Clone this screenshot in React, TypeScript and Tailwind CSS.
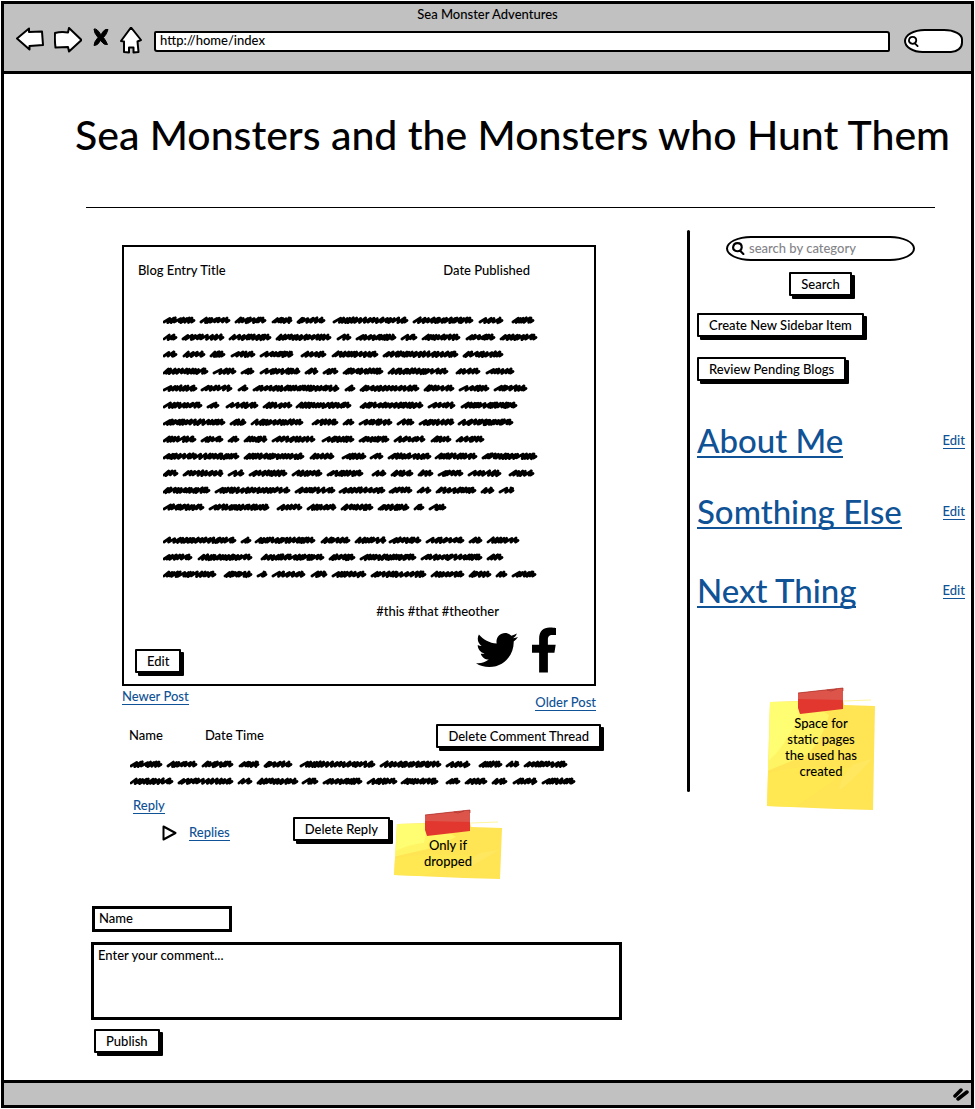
import type { ReactNode } from "react";
import { FaFacebookF, FaTwitter } from "react-icons/fa";

type Line = number[];

const postLines: Line[] = [
  [0, 32, 37, 67, 72, 103, 109, 129, 134, 162, 170, 245, 250, 310, 316, 340, 349, 371],
  [0, 14, 19, 61, 66, 108, 113, 168, 174, 188, 193, 233, 238, 254, 259, 297, 303, 332, 337, 374],
  [0, 14, 20, 42, 47, 62, 68, 92, 97, 130, 138, 163, 169, 215, 220, 295, 300, 340],
  [0, 45, 50, 73, 78, 91, 97, 137, 142, 155, 160, 175, 180, 220, 225, 285, 293, 317, 323, 351],
  [0, 34, 38, 69, 75, 85, 90, 176, 182, 192, 197, 256, 261, 291, 296, 326, 331, 364],
  [0, 39, 44, 56, 63, 95, 100, 129, 133, 188, 197, 260, 265, 292, 298, 354],
  [0, 62, 67, 83, 88, 140, 149, 175, 180, 191, 196, 229, 234, 251, 256, 291, 295, 350],
  [0, 33, 38, 60, 65, 76, 81, 104, 109, 152, 159, 191, 196, 226, 231, 262, 268, 288, 293, 321],
  [0, 76, 81, 141, 147, 171, 179, 203, 207, 220, 225, 268, 272, 314, 319, 374],
  [0, 15, 20, 60, 65, 81, 86, 124, 129, 159, 164, 200, 209, 223, 228, 250, 255, 270, 275, 300, 305, 338, 346, 371],
  [0, 47, 52, 127, 132, 172, 176, 222, 226, 249, 254, 268, 273, 313, 318, 331, 336, 351],
  [0, 41, 46, 106, 114, 139, 144, 173, 178, 210, 215, 246, 251, 261, 266, 283],
  [],
  [0, 73, 78, 88, 92, 152, 158, 187, 192, 223, 226, 258, 263, 301, 306, 319, 324, 356],
  [0, 29, 35, 89, 98, 161, 166, 192, 197, 253, 258, 319, 324, 340],
  [0, 53, 61, 89, 94, 104, 109, 142, 148, 164, 169, 203, 208, 263, 268, 301, 306, 328, 333, 344, 349, 373],
];

const commentLines: Line[] = [
  [0, 32, 37, 67, 72, 103, 109, 129, 134, 162, 170, 245, 250, 311, 316, 340, 349, 372, 376, 389, 394, 437],
  [0, 43, 48, 103, 108, 122, 127, 168, 172, 188, 193, 232, 237, 267, 271, 308, 316, 330, 335, 357, 362, 377, 383, 407, 412, 445],
];

function wordPath(start: number, end: number, y: number, seed: number) {
  let s = seed;
  const next = () => {
    s = (s * 1103515245 + 12345) % 2147483648;
    return s / 2147483648;
  };
  let x = start + 1;
  let d = `M${x} ${y + 2}`;
  while (x < end - 8) {
    const rise = 4 + next() * 3;
    const top = y - 1.4 - next() * 0.8;
    const back = 0.8 + next() * 2.2;
    const low = y + 1.8 + next() * 0.9;
    d += `L${(x + rise).toFixed(1)} ${top.toFixed(1)}L${(x + rise - back).toFixed(1)} ${low.toFixed(1)}`;
    x += rise - back;
  }
  return `${d}L${end - 3} ${y - 2}L${end - 3.5} ${y + 2}L${end - 1} ${y + 0.5}`;
}

function Scribble({ lines, width, label }: { lines: Line[]; width: number; label: string }) {
  const height = lines.length * 17;
  let d = "";
  lines.forEach((line, row) => {
    const y = row * 17 + 8 - (row > 12 ? 1 : 0);
    for (let i = 0; i < line.length; i += 2) {
      d += wordPath(line[i], line[i + 1], y, row * 97 + i * 31 + 7);
    }
  });
  return (
    <svg role="img" aria-label={label} width={width} height={height} viewBox={`0 0 ${width} ${height}`} className="block max-w-full">
      <path d={d} fill="none" stroke="#000" strokeWidth="2.8" strokeLinecap="round" strokeLinejoin="round" />
    </svg>
  );
}

function SketchButton({ children }: { children: ReactNode }) {
  return (
    <button type="button" className="h-6 whitespace-nowrap rounded-[1px] border-2 border-black bg-white px-2.5 leading-5 shadow-[3px_3px_0_#000]">
      {children}
    </button>
  );
}

function SketchLink({ children }: { children: ReactNode }) {
  return (
    <a href="#" className="inline-block whitespace-nowrap border-b border-[#0f5295] leading-[15px] text-[#0f5295]">
      {children}
    </a>
  );
}

function StickyNote({ height, children }: { height: number; children: ReactNode }) {
  const b = height;
  return (
    <div className="relative w-[108px] px-2 pt-7 pb-5 text-center leading-4">
      <svg aria-hidden="true" className="absolute inset-0" width="108" height={height} viewBox={`0 0 108 ${height}`}>
        <path d={`M3 15L76 13L77 18L108 19L106 ${b}L70 ${b - 1}L0 ${b - 4}Z`} fill="#ffe454" />
        <path d={`M3 15L40 14L62 28Q54 ${b * 0.45} 40 ${b * 0.55}L1 ${b * 0.68}Z`} fill="#fff968" opacity=".75" />
        <path d={`M3 15L34 15L30 34Q16 ${b * 0.5} 2 ${b * 0.6}Z`} fill="#ffff76" opacity=".8" />
        <path d={`M1 ${b * 0.7}Q34 ${b * 0.62} 84 ${b * 0.66}Q60 ${b * 0.8} 28 ${b - 3}L0 ${b - 4}Z`} fill="#ffe850" opacity=".8" />
        <path d={`M86 ${b * 0.63}L106 ${b * 0.58}L84 ${b * 0.76}Q76 ${b * 0.82} 72 ${b * 0.84}Q74 ${b * 0.72} 86 ${b * 0.63}Z`} fill="#fff07c" opacity=".3" />
        <path d="M77 14L104 13" stroke="#fff6a0" />
        <path d="M31 6L76 1V22L33 27L31 21Z" fill="#e2372f" />
        <path d="M31 6L76 1V13L31 12Z" fill="#dd544a" />
        <path d="M60 3L64 4L70 2M31 6L76 1V4" stroke="#a9332c" strokeWidth=".7" fill="none" />
      </svg>
      <p className="relative">{children}</p>
    </div>
  );
}

function NavIcon({ label, width, d, solid }: { label: string; width: number; d: string; solid?: boolean }) {
  return (
    <button type="button" aria-label={label} className="shrink-0">
      <svg width={width} height="28" viewBox={`0 0 ${width} 28`} className="block">
        <path d={d} fill={solid ? "#000" : "#fff"} stroke="#000" strokeWidth={solid ? 1 : 2} strokeLinejoin="round" />
      </svg>
    </button>
  );
}

function Magnifier({ size }: { size: number }) {
  return (
    <svg aria-hidden="true" width={size} height={size} viewBox="0 0 12 12" className="shrink-0">
      <path d="M5 1Q9 1 9 5Q8.500 8.500 5 8.500Q1 8 1 5Q1.500 1 5 1ZM7.500 8L10.500 11" fill="none" stroke="#000" strokeWidth="2" strokeLinecap="round" />
    </svg>
  );
}

const sidebarItems = [
  { title: "About Me", gap: "mt-[42px]" },
  { title: "Somthing Else", gap: "mt-[35px]" },
  { title: "Next Thing", gap: "mt-[43px]" },
];

export default function App() {
  return (
    <div className="flex min-h-screen flex-col bg-white p-px font-['Lato',sans-serif] text-[13px] font-medium text-black">
      <div className="flex flex-1 flex-col border-[3px] border-black">
        <header className="border-b-[3px] border-black bg-[#c1c1c1] pb-[13px]">
          <div className="text-center leading-5">Sea Monster Adventures</div>
          <nav className="flex h-[34px] items-center gap-2.5 pr-2 pl-3">
            <NavIcon label="Back" width={28} d="M1 11.500L13 1.500V5L26 4.500L27 18L13.500 19V22.500Z" />
            <NavIcon label="Forward" width={28} d="M1 6Q7 4.500 14 5.500L15 1L27.500 13L15 24.500L14 20L1.500 20.500Q.5 13 1 6Z" />
            <NavIcon
              label="Stop"
              width={18}
              solid
              d="M2 2Q5 1 9 8Q12 1.500 16 2.500Q15 7 11.500 10.500Q14 14 15.500 17.500Q12 18.500 8.500 13.500Q5.500 19 2 18.500Q2 15 6 10.500Q2 6 2 2Z"
            />
            <NavIcon label="Home" width={22} d="M11 0.500L21 13L17.500 14.500L18.500 25L13.500 25.500V20.500H9V25.500L4 25V14.500L1 14Z" />
            <input
              aria-label="Address"
              defaultValue="http://home/index"
              className="ml-0.5 h-[21px] min-w-0 flex-1 rounded-[2px_3px_2px_3px] border-2 border-black bg-white px-1 pb-0.5 outline-none"
            />
            <label className="ml-1 flex h-6 w-[59px] shrink-0 items-center rounded-[24px_22px_14px_22px/14px_12px_12px_14px] border-2 border-black bg-white pl-0.5">
              <Magnifier size={11} />
              <input aria-label="Quick search" className="w-full min-w-0 bg-transparent outline-none" />
            </label>
          </nav>
        </header>

        <main className="flex-1">
          <h1 className="pt-[37px] pl-[50px] text-center text-[41px] leading-[48px]">Sea Monsters and the Monsters who Hunt Them</h1>
          <hr className="mt-12 mr-9 ml-[82px] border-t border-black" />

          <div className="flex pt-[22px]">
            <div className="min-w-0 flex-1">
              <article className="mt-[15px] mr-[91px] ml-[118px] border-2 border-black pt-[13px]">
                <div className="flex justify-between pr-16 pl-3.5 leading-5">
                  <h2>Blog Entry Title</h2>
                  <span>Date Published</span>
                </div>
                <div className="mt-8 ml-[39px]">
                  <Scribble lines={postLines} width={376} label="Blog entry text" />
                </div>
                <p className="mt-[17px] pr-[95px] text-right leading-5">#this #that #theother</p>
                <div className="flex items-end justify-between pt-1.5 pr-9 pb-[11px] pl-[11px]">
                  <SketchButton>Edit</SketchButton>
                  <div className="flex items-center gap-3">
                    <a href="#" aria-label="Twitter">
                      <FaTwitter size={42} />
                    </a>
                    <a href="#" aria-label="Facebook">
                      <FaFacebookF size={46} className="w-7" />
                    </a>
                  </div>
                </div>
              </article>

              <div className="mt-[3px] mr-[91px] ml-[118px] flex items-start justify-between">
                <SketchLink>Newer Post</SketchLink>
                <div className="pt-1">
                  <SketchLink>Older Post</SketchLink>
                </div>
              </div>

              <section>
                <div className="mt-[11px] mr-[86px] ml-[125px] flex items-center justify-between">
                  <div className="flex gap-[42px]">
                    <span>Name</span>
                    <span>Date Time</span>
                  </div>
                  <SketchButton>Delete Comment Thread</SketchButton>
                </div>
                <div className="mt-2 ml-[126px]">
                  <Scribble lines={commentLines} width={447} label="Comment text" />
                </div>
                <div className="mt-1.5 ml-[129px]">
                  <SketchLink>Reply</SketchLink>
                </div>
                <div className="mt-0.5 mr-[185px] ml-[158px] flex items-start">
                  <div className="flex flex-1 items-center gap-3 pt-2">
                    <svg aria-hidden="true" width="15" height="16" viewBox="0 0 15 16">
                      <path d="M1.500 1.500L13.500 8L1.500 14.500Z" fill="#fff" stroke="#000" strokeWidth="2" strokeLinejoin="round" />
                    </svg>
                    <SketchLink>Replies</SketchLink>
                  </div>
                  <SketchButton>Delete Reply</SketchButton>
                  <div className="-mt-2 ml-1">
                    <StickyNote height={70}>
                      Only if
                      <br />
                      dropped
                    </StickyNote>
                  </div>
                </div>
              </section>

              <form className="mt-[17px] mr-[65px] mb-5 ml-[87px]">
                <input
                  aria-label="Name"
                  placeholder="Name"
                  className="ml-px block h-[26px] w-[140px] border-[3px] border-black px-1 pb-0.5 outline-none placeholder:text-black placeholder:opacity-100"
                />
                <textarea
                  aria-label="Comment"
                  placeholder="Enter your comment..."
                  className="mt-2.5 block h-[78px] w-full resize-none border-[3px] border-black px-1 leading-5 outline-none placeholder:text-black placeholder:opacity-100"
                />
                <div className="mt-[9px] ml-[3px]">
                  <SketchButton>Publish</SketchButton>
                </div>
              </form>
            </div>

            <div aria-hidden="true" className="h-[562px] w-[3px] shrink-0 rounded-full bg-black" />

            <aside className="w-[281px] shrink-0 pt-1.5 pr-1.5 pl-[7px]">
              <div className="mr-[50px] ml-[29px] flex flex-col items-center">
                <label className="flex h-[25px] w-full items-center gap-1 rounded-[26px/13px] border-2 border-black px-1">
                  <Magnifier size={13} />
                  <input
                    aria-label="search by category"
                    placeholder="search by category"
                    className="w-full min-w-0 outline-none placeholder:text-[#848489] placeholder:opacity-100"
                  />
                </label>
                <div className="mt-[11px]">
                  <SketchButton>Search</SketchButton>
                </div>
              </div>
              <div className="mt-[17px] flex flex-col items-start gap-5">
                <SketchButton>Create New Sidebar Item</SketchButton>
                <SketchButton>Review Pending Blogs</SketchButton>
              </div>
              {sidebarItems.map((item) => (
                <div key={item.title} className={`flex h-9 items-center justify-between ${item.gap}`}>
                  <a href="#" className="whitespace-nowrap border-b-2 border-[#0f5295] text-[33px] leading-8 text-[#0f5295]">
                    {item.title}
                  </a>
                  <SketchLink>Edit</SketchLink>
                </div>
              ))}
              <div className="mt-[78px] ml-[70px]">
                <StickyNote height={123}>
                  Space for
                  <br />
                  static pages
                  <br />
                  the used has
                  <br />
                  created
                </StickyNote>
              </div>
            </aside>
          </div>
        </main>

        <footer className="flex h-[25px] items-center justify-end border-t-[3px] border-black bg-[#c1c1c1] pr-px">
          <svg aria-hidden="true" width="18" height="14" viewBox="0 0 18 14">
            <path d="M3 9L9 3M6 12L15 5" stroke="#000" strokeWidth="3.500" strokeLinecap="round" />
          </svg>
        </footer>
      </div>
    </div>
  );
}
